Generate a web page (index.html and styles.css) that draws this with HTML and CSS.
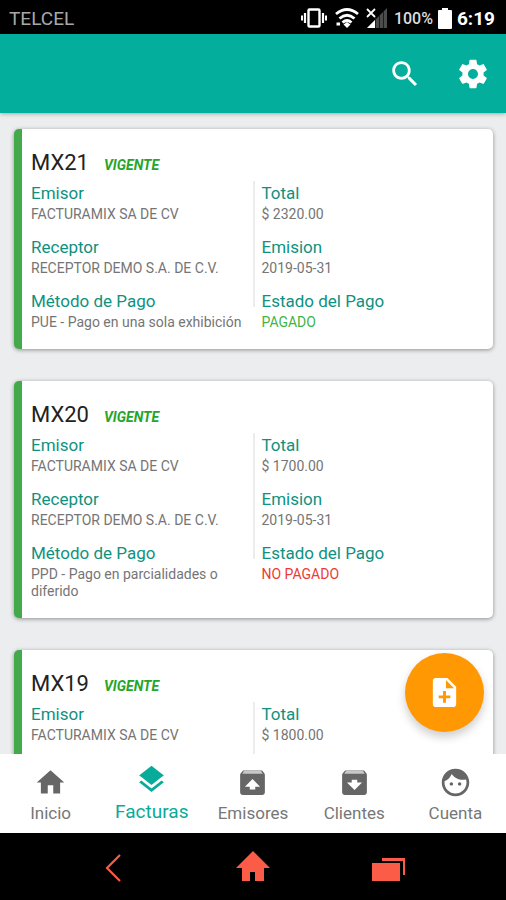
FILE: index.html
```html
<!DOCTYPE html>
<html lang="es">
<head>
<meta charset="utf-8">
<meta name="viewport" content="width=device-width, initial-scale=1">
<title>Facturas</title>
<link rel="stylesheet" href="styles.css">
</head>
<body>
<div class="status">
  <span class="carrier">TELCEL</span>
  <svg class="vibrate" viewBox="0 0 26 20" stroke="currentColor"><rect x="7.500" y="1.500" width="11" height="17" rx="1" stroke-width="2.400"/><path d="M4 5v10M22 5v10" stroke-width="2.200"/><path d="M1 7.500v5M25 7.500v5" stroke-width="2"/></svg>
  <svg class="wifi" viewBox="0 0 24 20" stroke="currentColor" stroke-width="2.800"><path d="M1 6Q12-3 23 6M4.500 10.500Q12 4 19.500 10.500M7.500 14.500Q12 10.500 16.500 14.500"/><path d="M12 14l3.500 2.500L12 20l-3.500-3.500z" fill="currentColor" stroke="none"/><path d="M1.500 16h3.500" stroke-width="3"/></svg>
  <svg class="signal" viewBox="0 0 22 20"><path d="M21 0v20H1z" fill="#4c4c4c"/><path d="M9 12v8H1z" fill="#fff"/><path d="M9.500 9v11M13.500 7v13M17.500 3v17" stroke="#1c1c1c" stroke-width="1"/><path d="M1 1l8 8M9 1L1 9" stroke="#fff" stroke-width="1.800"/></svg>
  <span class="percent">100%</span>
  <svg class="battery" viewBox="0 0 14 21"><path d="M4 0h6v2h3q1 0 1 1v17q0 1-1 1H1q-1 0-1-1V3q0-1 1-1h3z"/></svg>
  <span class="clock">6:19</span>
</div>
<header class="appbar">
  <button type="button" aria-label="Buscar"><svg viewBox="0 0 24 24"><path d="M15.500 14h-.79l-.28-.27C15.410 12.590 16 11.110 16 9.500 16 5.910 13.090 3 9.500 3S3 5.910 3 9.500 5.910 16 9.500 16c1.610 0 3.090-.59 4.230-1.570l.27.28v.79l5 4.990L20.490 19l-4.990-5zm-6 0C7.010 14 5 11.990 5 9.500S7.010 5 9.500 5 14 7.010 14 9.500 11.990 14 9.500 14z"/></svg></button>
  <button type="button" aria-label="Ajustes"><svg viewBox="0 0 24 24"><path d="M19.430 12.980c.04-.32.07-.64.07-.98s-.03-.66-.07-.98l2.110-1.650c.19-.15.24-.42.12-.64l-2-3.460c-.12-.22-.39-.3-.61-.22l-2.490 1c-.52-.4-1.080-.73-1.690-.98l-.38-2.650C14.460 2.180 14.250 2 14 2h-4c-.25 0-.46.18-.49.42l-.38 2.650c-.61.25-1.170.59-1.690.98l-2.490-1c-.23-.09-.49 0-.61.22l-2 3.460c-.13.22-.07.49.12.64l2.110 1.650c-.04.32-.07.65-.07.98s.03.66.07.98l-2.110 1.650c-.19.15-.24.42-.12.64l2 3.460c.12.22.39.3.61.22l2.490-1c.52.4 1.080.73 1.690.98l.38 2.650c.03.24.24.42.49.42h4c.25 0 .46-.18.49-.42l.38-2.650c.61-.25 1.170-.59 1.690-.98l2.490 1c.23.09.49 0 .61-.22l2-3.460c.12-.22.07-.49-.12-.64l-2.110-1.650zM12 15.500c-1.930 0-3.500-1.570-3.500-3.500s1.570-3.500 3.500-3.500 3.500 1.570 3.500 3.500-1.570 3.500-3.500 3.500z"/></svg></button>
</header>
<div class="content">
  <main class="list">
    <article class="card">
      <header><h2>MX21</h2><em>VIGENTE</em></header>
      <div class="fields">
        <dl><dt>Emisor</dt><dd>FACTURAMIX SA DE CV</dd><dt>Receptor</dt><dd>RECEPTOR DEMO S.A. DE C.V.</dd><dt>Método de Pago</dt><dd>PUE - Pago en una sola exhibición</dd></dl>
        <div class="divider"></div>
        <dl><dt>Total</dt><dd>$ 2320.00</dd><dt>Emision</dt><dd>2019-05-31</dd><dt>Estado del Pago</dt><dd class="paid">PAGADO</dd></dl>
      </div>
    </article>
    <article class="card">
      <header><h2>MX20</h2><em>VIGENTE</em></header>
      <div class="fields">
        <dl><dt>Emisor</dt><dd>FACTURAMIX SA DE CV</dd><dt>Receptor</dt><dd>RECEPTOR DEMO S.A. DE C.V.</dd><dt>Método de Pago</dt><dd>PPD - Pago en parcialidades o diferido</dd></dl>
        <div class="divider"></div>
        <dl><dt>Total</dt><dd>$ 1700.00</dd><dt>Emision</dt><dd>2019-05-31</dd><dt>Estado del Pago</dt><dd class="unpaid">NO PAGADO</dd></dl>
      </div>
    </article>
    <article class="card">
      <header><h2>MX19</h2><em>VIGENTE</em></header>
      <div class="fields">
        <dl><dt>Emisor</dt><dd>FACTURAMIX SA DE CV</dd></dl>
        <div class="divider"></div>
        <dl><dt>Total</dt><dd>$ 1800.00</dd></dl>
      </div>
    </article>
  </main>
  <button type="button" class="fab" aria-label="Nueva factura"><svg viewBox="0 0 24 24"><path d="M14 2H6c-1.100 0-2 .9-2 2v16c0 1.100.89 2 2 2h12c1.100 0 2-.9 2-2V8l-6-6zm2 14h-3v3h-2v-3H8v-2h3v-3h2v3h3v2zm-3-7V3.500L18.500 9H13z"/></svg></button>
</div>
<nav class="tabs">
  <a href="#inicio"><svg viewBox="0 0 24 24"><path d="M10 20v-6h4v6h5v-8h3L12 3 2 12h3v8z"/></svg><span>Inicio</span></a>
  <a href="#facturas" class="active" aria-current="page"><svg viewBox="0 0 24 24"><path d="M11.990 18.540l-7.370-5.730L3 14.070l9 7 9-7-1.630-1.270-7.380 5.740zM12 16l7.360-5.730L21 9l-9-7-9 7 1.630 1.270L12 16z"/></svg><span>Facturas</span></a>
  <a href="#emisores"><svg viewBox="0 0 24 24"><path d="M20.550 5.220l-1.390-1.680C18.880 3.210 18.470 3 18 3H6c-.47 0-.88.21-1.150.55L3.460 5.220C3.170 5.570 3 6.010 3 6.500V19c0 1.100.89 2 2 2h14c1.100 0 2-.9 2-2V6.500c0-.49-.17-.93-.45-1.280z"/><path class="lid" d="M4.600 5.600L6 3h12l1.400 2.600z"/><path class="cut" d="M12 9.500l5.500 5.500H14v2h-4v-2H6.500z"/></svg><span>Emisores</span></a>
  <a href="#clientes"><svg viewBox="0 0 24 24"><path d="M20.550 5.220l-1.390-1.680C18.880 3.210 18.470 3 18 3H6c-.47 0-.88.21-1.150.55L3.460 5.220C3.170 5.570 3 6.010 3 6.500V19c0 1.100.89 2 2 2h14c1.100 0 2-.9 2-2V6.500c0-.49-.17-.93-.45-1.280z"/><path class="lid" d="M4.600 5.600L6 3h12l1.400 2.600z"/><path class="cut" d="M12 17.500L6.500 12H10v-2h4v2h3.500z"/></svg><span>Clientes</span></a>
  <a href="#cuenta"><svg viewBox="0 0 24 24"><path d="M9 11.750c-.69 0-1.250.56-1.250 1.250s.56 1.250 1.250 1.250 1.250-.56 1.250-1.250-.56-1.250-1.250-1.250zm6 0c-.69 0-1.250.56-1.250 1.250s.56 1.250 1.250 1.250 1.250-.56 1.250-1.250-.56-1.250-1.250-1.250zM12 2C6.480 2 2 6.480 2 12s4.480 10 10 10 10-4.480 10-10S17.520 2 12 2zm0 18c-4.410 0-8-3.590-8-8 0-.29.02-.58.05-.86 2.360-1.050 4.230-2.980 5.210-5.370C11.070 8.330 14.050 10 17.420 10c.78 0 1.530-.09 2.250-.26.21.71.33 1.470.33 2.260 0 4.410-3.590 8-8 8z"/></svg><span>Cuenta</span></a>
</nav>
<div class="system">
  <button type="button" aria-label="Atrás"><svg class="back" viewBox="0 0 36 36" stroke="currentColor" stroke-width="2.200"><path d="M20 6L7 19l13 13"/></svg></button>
  <button type="button" aria-label="Inicio del sistema"><svg viewBox="0 0 36 36"><path d="M18 2L1 19h6v13h8v-9h5v9h9V19h6z"/></svg></button>
  <button type="button" aria-label="Recientes"><svg viewBox="0 0 36 36"><path d="M2 14h28v18H2zM12 9h23v17h-2V12H12z"/></svg></button>
</div>
</body>
</html>
```
FILE: styles.css
```css
* { box-sizing: border-box; }
body {
  margin: 0;
  height: 100vh;
  display: flex;
  flex-direction: column;
  overflow: hidden;
  background: #ebedef;
  font-family: Roboto, "Liberation Sans", sans-serif;
}
button {
  display: flex;
  align-items: center;
  justify-content: center;
  border: 0;
  padding: 0;
  background: none;
  color: inherit;
}
svg { display: block; fill: currentColor; }

.status {
  flex: none;
  display: flex;
  align-items: center;
  height: 34px;
  padding: 2px 11px 0 9px;
  background: #000;
  color: #fff;
}
.carrier { margin-right: auto; font-size: 19px; color: #a8a8a8; }
.vibrate { width: 26px; height: 20px; fill: none; }
.wifi { width: 24px; height: 20px; margin-left: 8px; fill: none; }
.signal { width: 22px; height: 20px; margin-left: 7px; }
.percent { margin-left: 6px; font-size: 16px; font-weight: 500; color: #ddd; }
.battery { width: 14px; height: 21px; margin: 0 5px; }
.clock { font-size: 19px; font-weight: 700; }

.appbar {
  flex: none;
  display: flex;
  align-items: center;
  justify-content: flex-end;
  gap: 34px;
  height: 79px;
  padding-right: 16px;
  background: #03ae9c;
  color: #fff;
  box-shadow: 0 1px 4px rgba(0, 0, 0, .3);
  z-index: 1;
}
.appbar svg { width: 34px; height: 34px; }

.content { position: relative; flex: 1; min-height: 0; }
.list {
  display: flex;
  flex-direction: column;
  gap: 32px;
  height: 100%;
  padding: 16px 13px 0 14px;
  overflow: hidden;
}
.card {
  flex: none;
  border-left: 8px solid #43a94b;
  border-radius: 5px;
  padding: 18px 17px 18px 9px;
  background: #fff;
  box-shadow: 0 1px 4px rgba(0, 0, 0, .4);
}
.card header { display: flex; align-items: baseline; gap: 15px; height: 34px; }
.card h2 { margin: 0; font-size: 22px; line-height: 32px; font-weight: 400; color: #222; }
.card em { font-size: 14px; font-weight: 700; color: #25a52a; }
.fields { display: grid; grid-template-columns: 1fr 2px 1fr; column-gap: 7px; }
.divider { height: 126px; background: #ececec; }
dl { margin: 0; }
dt { font-size: 17px; line-height: 25px; color: #0f917f; }
dd { margin: 0 0 12px; font-size: 14px; line-height: 17px; color: #757575; }
dd:last-child { margin-bottom: 0; }
dd.paid { color: #3fb544; }
dd.unpaid { color: #ee3a35; }

.fab {
  position: absolute;
  right: 22px;
  bottom: 22px;
  width: 79px;
  height: 79px;
  border-radius: 50%;
  background: #ff9803;
  color: #fff;
  box-shadow: 0 5px 10px rgba(0, 0, 0, .2);
}
.fab svg { width: 35px; height: 35px; }

.tabs {
  flex: none;
  display: grid;
  grid-template-columns: repeat(5, 1fr);
  height: 79px;
  background: #fff;
}
.tabs a {
  display: flex;
  flex-direction: column;
  align-items: center;
  padding-top: 12px;
  color: #777;
  font-size: 17px;
  line-height: 28px;
  text-decoration: none;
}
.tabs svg { width: 33px; height: 33px; color: #666; }
.tabs a.active { padding-top: 9px; color: #08ab99; font-size: 19px; line-height: 32px; }
.tabs .active svg { color: #08ab99; }
.tabs .lid { fill: #c8c8c8; }
.tabs .cut { fill: #fff; }

.system {
  flex: none;
  display: flex;
  justify-content: center;
  gap: 99px;
  height: 67px;
  background: #000;
  color: #fa5c48;
}
.system svg { width: 36px; height: 36px; }
.system .back { fill: none; }
```
